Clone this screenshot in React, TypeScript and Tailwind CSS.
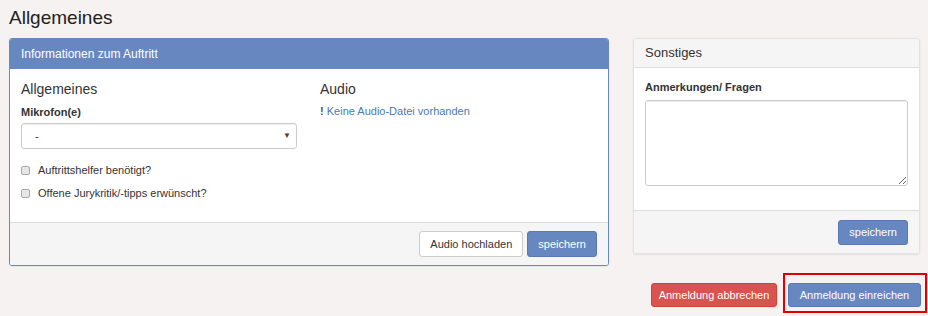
import React from 'react';

const font = { fontFamily: '"Liberation Sans", Arial, sans-serif' };

function Checkbox({ label }: { label: string }) {
  return (
    <label className="flex items-center gap-[8px] text-[11px] leading-[13px] text-[#333]">
      <span className="h-[9px] w-[9px] rounded-[2px] border border-[#aaa] bg-[#e6e6e6]" />
      {label}
    </label>
  );
}

export default function App() {
  return (
    <div className="h-[316px] w-[928px] overflow-hidden bg-[#f5f2f1] pl-[9px] text-[#333]" style={font}>
      <h1 className="pt-[7px] text-[19px] leading-[22px] text-[#222]">Allgemeines</h1>

      <div className="mt-[9px] flex items-start">
        {/* Auftritt */}
        <div className="w-[600px] overflow-hidden rounded-[3px] border border-[#6787c1] bg-white shadow-[0_1px_1px_rgba(0,0,0,0.05)]">
          <div className="flex h-[30px] items-center bg-[#6787c1] px-[11px] text-[12px] text-white">
            Informationen zum Auftritt
          </div>
          <div className="flex px-[11px] pb-[22px] pt-[12px]">
            <div className="w-[276px]">
              <h3 className="text-[14px] leading-[16px] text-[#333]">Allgemeines</h3>
              <div className="mt-[9px] text-[11px] font-bold leading-[13px]">Mikrofon(e)</div>
              <div className="mt-[4px] flex h-[26px] items-center justify-between rounded-[3px] border border-[#ccc] bg-white pl-[13px] pr-[5px] text-[11px] shadow-[inset_0_1px_1px_rgba(0,0,0,0.07)]">
                <span>-</span>
                <span className="text-[8px] text-[#444]">▼</span>
              </div>
              <div className="mt-[15px] flex flex-col gap-[10px]">
                <Checkbox label="Auftrittshelfer benötigt?" />
                <Checkbox label="Offene Jurykritik/-tipps erwünscht?" />
              </div>
            </div>
            <div className="ml-[23px]">
              <h3 className="text-[14px] leading-[16px] text-[#333]">Audio</h3>
              <div className="mt-[8px] text-[11px] leading-[13px]">
                <span className="font-bold text-[#555]">!</span>{' '}
                <span className="text-[#4a7ab0]">Keine Audio-Datei vorhanden</span>
              </div>
            </div>
          </div>
          <div className="flex h-[43px] items-center justify-end gap-[4px] border-t border-[#ddd] bg-[#f5f5f5] pr-[11px]">
            <button className="h-[26px] rounded-[3px] border border-[#ccc] bg-white px-[10px] text-[11px] text-[#333]">
              Audio hochladen
            </button>
            <button className="h-[26px] rounded-[3px] border border-[#5a79b4] bg-[#6787c1] px-[10px] text-[11px] text-white">
              speichern
            </button>
          </div>
        </div>

        {/* Sonstiges */}
        <div className="ml-[24px] w-[287px] overflow-hidden rounded-[3px] border border-[#e2e2e2] bg-white shadow-[0_1px_2px_rgba(0,0,0,0.08)]">
          <div className="flex h-[29px] items-center border-b border-[#ddd] bg-[#f5f5f5] px-[11px] text-[13px] text-[#333]">
            Sonstiges
          </div>
          <div className="px-[11px] pb-[24px] pt-[13px]">
            <div className="text-[11px] font-bold leading-[13px]">Anmerkungen/ Fragen</div>
            <textarea className="mt-[6px] block h-[86px] w-[263px] resize-y rounded-[3px] border border-[#ccc] bg-white shadow-[inset_0_1px_1px_rgba(0,0,0,0.07)] outline-none" />
          </div>
          <div className="flex h-[43px] items-center justify-end border-t border-[#ddd] bg-[#f5f5f5] pr-[11px]">
            <button className="h-[25px] rounded-[3px] border border-[#5a79b4] bg-[#6787c1] px-[10px] text-[11px] text-white">
              speichern
            </button>
          </div>
        </div>
      </div>

      <div className="mt-[7px] flex items-end justify-end pr-[1px]">
        <button className="mb-[6px] h-[24px] w-[126px] rounded-[3px] border border-[#d43f3a] bg-[#d9534f] text-[11px] text-white">
          Anmeldung abbrechen
        </button>
        <div className="ml-[6px] border-2 border-[#e00000] pb-[4px] pl-[3px] pr-[4px] pt-[8px]">
          <button className="block h-[24px] w-[133px] rounded-[3px] border border-[#5a79b4] bg-[#6787c1] text-[11px] text-white">
            Anmeldung einreichen
          </button>
        </div>
      </div>
    </div>
  );
}
